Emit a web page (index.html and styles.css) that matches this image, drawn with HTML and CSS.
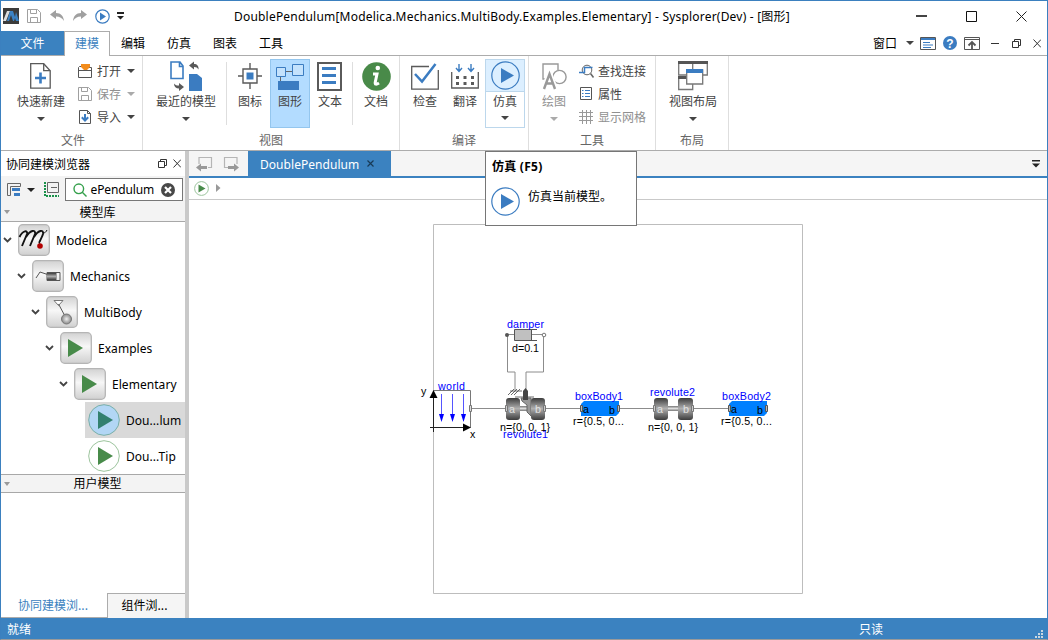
FILE: index.html
```
<!DOCTYPE html>
<html lang="zh-CN">
<head>
<meta charset="utf-8">
<title>Sysplorer</title>
<link rel="stylesheet" href="styles.css">
</head>
<body>
<svg width="0" height="0" class="defs">
  <defs>
    <linearGradient id="tile" x1="0" y1="0" x2="0" y2="1"><stop offset="0" stop-color="#d2d2d2"/><stop offset=".45" stop-color="#f7f7f7"/><stop offset="1" stop-color="#d0d0d0"/></linearGradient>
    <linearGradient id="drum" x1="0" y1="0" x2="0" y2="1"><stop offset="0" stop-color="#3c3c3c"/><stop offset=".48" stop-color="#b0b0b0"/><stop offset="1" stop-color="#3c3c3c"/></linearGradient>
    <linearGradient id="shaft" x1="0" y1="0" x2="0" y2="1"><stop offset="0" stop-color="#777"/><stop offset=".5" stop-color="#ddd"/><stop offset="1" stop-color="#777"/></linearGradient>
    <radialGradient id="ball"><stop offset="0" stop-color="#eee"/><stop offset="1" stop-color="#888"/></radialGradient>
  </defs>
</svg>
<div class="window">
  <header class="titlebar">
    <div class="quick">
      <svg width="16" height="16"><path fill="#3b3b3b" d="M0 0h16v16H0z"/><path fill="#ddd" d="M4 3h3L3 13H0z"/><path fill="#3b82c4" d="M7 3h3l2 6 1-5 3 9h-3l-1-3-1 3h-1L8 7l-2 6H4z"/></svg>
      <svg class="q-save" width="14" height="14" fill="none" stroke="#a0a0a0"><path d="M.5 .5h10l3 3v10H.5zM3.500 .5v4h6v-4M3.500 13.500v-5h7v5"/></svg>
      <svg class="q-undo" width="14" height="12"><path fill="#a0a0a0" d="M0 4.500 6 0v3c5 0 7.500 3 8 8-2-3-4-4.500-8-4.500V9z"/></svg>
      <svg class="q-redo" width="14" height="12"><path fill="#a0a0a0" d="M14 4.500 8 0v3C3 3 .5 6 0 11c2-3 4-4.500 8-4.500V9z"/></svg>
      <svg class="q-run" width="15" height="15"><circle cx="7.500" cy="7.500" r="6.700" fill="none" stroke="#3b7cc1" stroke-width="1.200"/><path fill="#3b7cc1" d="M5 3.500v8l6-4z"/></svg>
      <svg class="q-more" width="7" height="8"><path fill="#222" d="M0 0h7v2H0zM0 4h7L3.500 7.500z"/></svg>
    </div>
    <div class="title latin">DoublePendulum[Modelica.Mechanics.MultiBody.Examples.Elementary] - Sysplorer(Dev) - [图形]</div>
    <div class="winbtns">
      <svg width="11" height="11"><path fill="#444" d="M0 4h11v2H0z"/></svg>
      <svg width="11" height="11" fill="none" stroke="#111"><path d="M.5 .5h10v10H.5z"/></svg>
      <svg width="11" height="11" fill="none" stroke="#222"><path d="m.5 .5 10 10m0-10-10 10"/></svg>
    </div>
  </header>

  <nav class="menu">
    <span class="file">文件</span><span class="active">建模</span><span>编辑</span><span>仿真</span><span>图表</span><span>工具</span>
    <div class="menu-right">
      <b class="win">窗口</b>
      <i class="down"></i>
      <svg class="m-panel" width="16" height="13"><path fill="#fff" stroke="#555" d="M.5 .5h15v12H.5z"/><path fill="#3b7cc1" d="M1 1h14v2H1zM3 5h7v1H3zM3 7.500h10v1H3zM3 10h8v1H3z"/></svg>
      <svg class="m-help" width="14" height="14"><circle cx="7" cy="7" r="7" fill="#3b7cc1"/><text x="7" y="11.500" text-anchor="middle" class="qmark">?</text></svg>
      <svg class="m-up" width="16" height="13" fill="none" stroke="#555"><path d="M.5 .5h15v12H.5zM1 2.500h14"/><path stroke-width="1.800" d="M8 12V5M4.500 8.500 8 5l3.500 3.500"/></svg>
      <svg class="m-min" width="8" height="9"><path fill="#333" d="M0 4h8v1H0z"/></svg>
      <svg class="m-res" width="9" height="9" fill="none" stroke="#333"><path d="M.5 2.500h6v6h-6zM2.500 2.500v-2h6v6h-2"/></svg>
      <svg class="m-x" width="8" height="9" fill="none" stroke="#333"><path d="m.5 .5 7.500 8m0-8-7.500 8"/></svg>
    </div>
  </nav>

  <section class="ribbon">
    <div class="group g-file">
      <div class="tools">
        <div class="btn wide">
          <div class="ico"><svg width="22" height="26" fill="none" stroke="#5a5a5a" stroke-width="1.300"><path d="M.7 .7h13l6.500 7v17.500H.7z"/><path d="M13.700 .7v7h6.500"/><path stroke="#3b7cc1" stroke-width="2.600" d="M5 15h11M10.500 9.500v11"/></svg></div>
          <span>快速新建</span><div class="arr"><i class="down"></i></div>
        </div>
        <div class="rows">
          <div class="row"><svg width="14" height="14"><path fill="none" stroke="#555" d="M4.500 2.500h-3l-1 1v10h13v-10h-3M.5 6.500h13"/><path fill="#f28c1c" d="M3 0h9v3L9 6H6L4 4 3 3z"/></svg><span>打开</span><i class="down"></i></div>
          <div class="row off"><svg width="14" height="14" fill="none" stroke="#a0a0a0"><path d="M.5 .5h10l3 3v10H.5zM3.500 .5v4h6v-4M3.500 13.500v-5h7v5"/></svg><span>保存</span><i class="down"></i></div>
          <div class="row"><svg width="14" height="14" fill="none" stroke="#555"><path d="M1.500 .5h8l3 3v10h-11zM9.500 .5v3h3"/><path stroke="#3b7cc1" stroke-width="2" d="M7 4v6M3.800 7.300 7 10.500l3.200-3.200"/></svg><span>导入</span><i class="down"></i></div>
        </div>
      </div>
      <div class="name">文件</div>
    </div>
    <div class="group g-view">
      <div class="tools">
        <div class="btn recent">
          <div class="ico"><svg width="32" height="30"><path fill="#fff" stroke="#3b7cc1" stroke-width="1.600" d="M1 1h9l3 4v12.500H1zM9.500 1v4.500H13"/><path fill="#3b7cc1" d="M19 13h8l5 4v13H19z"/><path fill="#5a5a5a" d="m19 4.500 5-4V3c3 0 5 2 4.500 5.500C27.500 6.800 26.500 6 24 6v2.500zM14 26l-5 4v-2.500c-3 0-5-1.800-5-5 1.500 1.700 2.500 2 5 2V22z"/></svg></div>
          <span>最近的模型</span><div class="arr"><i class="down"></i></div>
        </div>
        <div class="sep s1"></div>
        <div class="btn"><div class="ico"><svg width="24" height="26" fill="none" stroke="#5a5a5a" stroke-width="1.400"><path d="M5 6h14v14H5zM12 0v6M12 20v6M0 13h5M19 13h5"/><path fill="#3b7cc1" stroke="none" d="M8.500 9.500h7v7h-7z"/></svg></div><span>图标</span></div>
        <div class="btn on"><div class="ico"><svg width="28" height="28" fill="none" stroke="#3b7cc1"><path fill="#c4e2fc" d="M.5 4.500h9v9h-9zM16.500 1.500h11v11h-11z"/><path stroke="#666" d="M10 8.500h6M4.500 14v4"/><path fill="#3b7cc1" stroke="none" d="M2 18h21v9H2z"/></svg></div><span>图形</span></div>
        <div class="btn"><div class="ico"><svg width="26" height="29"><path fill="#fff" stroke="#5a5a5a" stroke-width="2" d="M1 1h23v27H1z"/><path fill="#3b7cc1" d="M5 5h14v3H5zM5 12h14v3H5zM5 19h14v3H5z"/></svg></div><span>文本</span></div>
        <div class="sep s2"></div>
        <div class="btn"><div class="ico"><svg width="29" height="29"><circle cx="14.500" cy="14.500" r="14.300" fill="#498a49"/><circle cx="15.800" cy="6" r="2.300" fill="#fff"/><path fill="none" stroke="#fff" stroke-width="3" d="M11 12h4l-1.800 8.500q-.2 3 3.800 .5"/></svg></div><span>文档</span></div>
      </div>
      <div class="name">视图</div>
    </div>
    <div class="group g-compile">
      <div class="tools">
        <div class="btn"><div class="ico"><svg width="28" height="27" fill="none"><path stroke="#5a5a5a" stroke-width="1.300" d="M18 3.500H.7v22.700h26.600V7"/><path stroke="#3b7cc1" stroke-width="2.500" d="m4 11 7 7.500L24.500 1"/></svg></div><span>检查</span></div>
        <div class="btn"><div class="ico"><svg width="28" height="26" fill="none"><path stroke="#5a5a5a" stroke-width="1.300" d="M.7 9v16h26.600V9"/><path stroke="#3b7cc1" stroke-width="1.400" d="M8 1v7M5 5l3 3.500L11 5M20 1v7M17 5l3 3.500L23 5"/><path fill="#5a5a5a" d="M5 13h3v3H5zM12.500 13h3v3h-3zM20 13h3v3h-3zM5 19h3v3H5zM12.500 19h3v3h-3zM20 19h3v3h-3z"/></svg></div><span>翻译</span></div>
        <div class="btn hover"><div class="ico"><svg width="29" height="29"><circle cx="14.500" cy="14.500" r="13.700" fill="none" stroke="#3b7cc1" stroke-width="1.200"/><path fill="#3b7cc1" d="M10 7v15l13-7.500z"/></svg></div><span>仿真</span><div class="arr"><i class="down"></i></div></div>
      </div>
      <div class="name">编译</div>
    </div>
    <div class="group g-tools">
      <div class="tools">
        <div class="btn off"><div class="ico"><svg width="25" height="27" fill="none" stroke="#999" stroke-width="1.400"><path d="M5 16H1V1h15v6"/><circle cx="17.500" cy="14" r="6.600"/><path stroke="#fff" stroke-width="6" d="m2 26 5.500-15L13 26"/><path stroke="#999" stroke-width="2.400" d="m2 26 5.500-15L13 26M4 20.500h7.500"/></svg></div><span>绘图</span><div class="arr"><i class="down"></i></div></div>
        <div class="rows">
          <div class="row"><svg width="16" height="14" fill="none"><circle cx="8" cy="6" r="4.800" stroke="#666"/><path stroke="#666" stroke-width="1.500" d="m11.500 9.500 3 4"/><path stroke="#3b7cc1" stroke-width="1.500" d="M0 8.500h5.500v-5h8"/></svg><span>查找连接</span></div>
          <div class="row"><svg width="14" height="14" fill="none"><path stroke="#555" d="M1.500 .5h11v12h-11z"/><path stroke="#3b7cc1" d="M3 3.500h1.500M6 3.500h5M3 6.500h1.500M6 6.500h5M3 9.500h1.500M6 9.500h5"/></svg><span>属性</span></div>
          <div class="row off"><svg width="14" height="14" fill="none" stroke="#999"><path d="M3.500 0v14M7.500 0v14M11.500 0v14M0 2.500h14M0 6.500h14M0 10.500h14"/></svg><span>显示网格</span></div>
        </div>
      </div>
      <div class="name">工具</div>
    </div>
    <div class="group g-layout">
      <div class="tools">
        <div class="btn wide"><div class="ico"><svg width="30" height="30" fill="#fff" stroke="#777" stroke-width="1.300"><path d="M.7 1h14v13H.7zM14.700 1h14.600v13H14.700zM.7 16h14v12.500H.7z"/><path stroke="#555" stroke-width="3" d="M0 1.500h30M0 16.500h14"/><path d="M8.700 9h16v14h-16z"/><path fill="#3b7cc1" stroke="none" d="M8 8h17v4H8z"/></svg></div><span>视图布局</span><div class="arr"><i class="down"></i></div></div>
      </div>
      <div class="name">布局</div>
    </div>
  </section>

  <main class="body">
    <aside class="side">
      <div class="side-head"><span>协同建模浏览器</span>
        <svg width="9" height="9" fill="none" stroke="#333"><path d="M.5 2.500h6v6h-6zM2.500 2.500v-2h6v6h-2"/></svg>
        <svg class="close" width="8" height="9" fill="none" stroke="#333"><path d="m.5 .5 7.500 8m0-8-7.500 8"/></svg>
      </div>
      <div class="side-tools">
        <svg width="14" height="13" fill="none"><path stroke="#666" d="M13.500 3.500v-3H.5v12h3v-9h10"/><path fill="#3b7cc1" d="M5 5h8v3H5zM7 10h6v3H7z"/></svg>
        <i class="down"></i>
        <svg class="t2" width="15" height="15" fill="none"><path stroke="#666" d="M3.500 .5h11v10h-11zM7 5.500h6"/><path stroke="#19914a" stroke-width="2" stroke-dasharray="2 1" d="M1 0v14h14"/></svg>
        <div class="search">
          <svg width="14" height="14" fill="none" stroke="#35a04c" stroke-width="1.400"><circle cx="5.800" cy="5.800" r="4.800"/><path d="m9.300 9.300 4.200 4.200"/></svg>
          <div class="query latin"><span>ePendulum</span></div>
          <svg width="14" height="14"><circle cx="7" cy="7" r="7" fill="#484848"/><path stroke="#fff" stroke-width="2.200" d="m4 4 6 6m0-6-6 6"/></svg>
        </div>
      </div>
      <div class="section"><i></i>模型库</div>
      <div class="tree latin">
        <div class="node"><svg class="chev" width="9" height="6"><path d="m1 1 3.500 3.500L8 1"/></svg><svg width="32" height="32"><rect class="tile" x=".7" y=".7" width="30.600" height="30.600" rx="4"/><path fill="none" stroke="#111" stroke-width="1.900" d="M1.500 13C5 6 10 6 9 10L4 22M8 13c4-7 10-8 9-3l-5 12M16 13c4-7 10-8 9-3-1 4-5 9-3 9"/><path fill="none" stroke="#111" d="M25 9c2 0 3-1 4-3"/><circle cx="22" cy="22" r="2.800" fill="#b30000"/></svg><span>Modelica</span></div>
        <div class="node l1"><svg class="chev" width="9" height="6"><path d="m1 1 3.500 3.500L8 1"/></svg><svg width="32" height="32"><rect class="tile" x=".7" y=".7" width="30.600" height="30.600" rx="4"/><path fill="none" stroke="#555" d="m4 18 4-6 9 3M15 12.500h13v8H15zM24 12.500v8"/><path fill="url(#drum)" d="M15 13h9v7h-9z"/></svg><span>Mechanics</span></div>
        <div class="node l2"><svg class="chev" width="9" height="6"><path d="m1 1 3.500 3.500L8 1"/></svg><svg width="32" height="32"><rect class="tile" x=".7" y=".7" width="30.600" height="30.600" rx="4"/><path stroke="#777" fill="#fff" d="M8 4.500h9l-4.500 5z"/><path stroke="#555" d="m12.500 8 7 13"/><circle cx="20.500" cy="23" r="5" fill="url(#ball)" stroke="#777"/></svg><span>MultiBody</span></div>
        <div class="node l3"><svg class="chev" width="9" height="6"><path d="m1 1 3.500 3.500L8 1"/></svg><svg width="32" height="32"><rect class="tile" x=".7" y=".7" width="30.600" height="30.600" rx="4"/><path fill="#488b4a" d="M8 7v18l15-9z"/></svg><span>Examples</span></div>
        <div class="node l4"><svg class="chev" width="9" height="6"><path d="m1 1 3.500 3.500L8 1"/></svg><svg width="32" height="32"><rect class="tile" x=".7" y=".7" width="30.600" height="30.600" rx="4"/><path fill="#488b4a" d="M8 7v18l15-9z"/></svg><span>Elementary</span></div>
        <div class="leaf sel"><svg width="32" height="32"><circle cx="16" cy="16" r="15.300" fill="#b2d6f5" stroke="#78afa9"/><path fill="#32806f" d="M10 7v18l15-9z"/></svg><span>Dou...lum</span></div>
        <div class="leaf"><svg width="32" height="32"><circle cx="16" cy="16" r="15.300" fill="#fff" stroke="#9cc49d"/><path fill="#488b4a" d="M10 7v18l15-9z"/></svg><span>Dou...Tip</span></div>
      </div>
      <div class="section user"><i></i>用户模型</div>
      <div class="side-fill"></div>
      <div class="side-tabs"><span class="cur">协同建模浏...</span><span class="other">组件浏...</span></div>
    </aside>

    <section class="doc">
      <div class="tabs">
        <svg class="nav1" width="17" height="16" fill="none"><path stroke="#b5b5b5" stroke-width="1.200" d="M3 8V1.500h12.500v10H12"/><path fill="#999" d="m0 11.500 5-4V10h6v3H5v2.500z"/></svg>
        <svg class="nav2" width="17" height="16" fill="none"><path stroke="#b5b5b5" stroke-width="1.200" d="M5 11.500H1.500v-10H14V8"/><path fill="#999" d="m16 11.500-5-4V10H5v3h6v2.500z"/></svg>
        <div class="tab latin"><span>DoublePendulum</span><svg width="7" height="7" stroke="#183a56" stroke-width="1.200"><path d="m.5 .5 6 6m0-6-6 6"/></svg></div>
        <svg class="tabmore" width="8" height="8"><path fill="#222" d="M0 0h8v1.500H0zM0 3.500h8L4 7.500z"/></svg>
      </div>
      <div class="crumbs">
        <svg width="15" height="15"><circle cx="7.500" cy="7.500" r="6.900" fill="#fff" stroke="#9cc49d"/><path fill="#488b4a" d="M4.500 3.500v8l7-4z"/></svg>
        <svg class="next" width="5" height="8"><path fill="#999" d="m0 0 4.500 4L0 8z"/></svg>
      </div>
      <div class="canvas">
        <svg class="diagram" width="858" height="418" viewBox="189 200 858 418">
          <path fill="none" stroke="#bdbdbd" d="M433.500 224.500h369v369h-369z"/>
          <g fill="none" stroke="#8c8c8c">
            <path d="M472 408.500h35M545 408.500h36M618 408.500h35M693 408.500h36"/>
            <path d="M507.500 335v37h7.500v18M543.500 335v37h-17.500v18M507 334.500h37"/>
          </g>
          <path fill="#fff" stroke="#777" d="M433.500 390.500h37v37h-37z"/>
          <path stroke="#222" d="M433.500 432V396M430 427.500h37"/>
          <path d="m433.500 390 4 8h-8zM471 427.500l-8-4v8z"/>
          <path stroke="#5555ff" d="M441.500 394v22M452.500 394v22M463.500 394v22"/>
          <path fill="#00f" d="M439 414h5l-2.500 8zM450 414h5l-2.500 8zM461 414h5l-2.500 8z"/>
          <path fill="#ddd" stroke="#777" d="M469.500 405.500h2v6h-2z"/>
          <path fill="#c0c0c0" stroke="#555" d="M514.500 329.500h17v11h-17z"/><path stroke="#555" fill="none" d="M531 329.500h6M531 340.500h6"/>
          <circle cx="507" cy="335" r="2" fill="#555"/><circle cx="544" cy="335" r="1.800" fill="#fff" stroke="#777"/>
          <path stroke="#444" stroke-width=".8" fill="none" d="m508 395 6-6m-3 6 6-6m-3 6 6-6M510 391h12M515 397h19"/>
          <path fill="url(#shaft)" d="M519 406h13v5h-13z"/>
          <path fill="#999" stroke="#666" d="M521 398h10v18l-4-4v-7l-5-4z"/><path fill="#444" d="M523 391l2.500-3 2.500 3v9h-5z"/>
          <rect x="506" y="398" width="14" height="22" rx="3" fill="url(#drum)"/><rect x="531" y="398" width="14" height="22" rx="3" fill="url(#drum)"/>
          <path fill="#ccc" stroke="#777" d="M505.500 405.500h2v6h-2zM543.500 405.500h2v6h-2z"/>
          <path fill="url(#shaft)" d="M667 406h12v5h-12z"/>
          <rect x="654" y="398" width="14" height="22" rx="3" fill="url(#drum)"/><rect x="678" y="398" width="15" height="22" rx="3" fill="url(#drum)"/>
          <path fill="#ccc" stroke="#777" d="M653.500 405.500h2v6h-2zM691.500 405.500h2v6h-2z"/>
          <g id="box"><path fill="#0080ff" d="m581 404 3-3h35v12l-3 3h-35z"/><path fill="#bbb" stroke="#555" d="M580.500 405.500h2v6h-2zM617.500 405.500h2v6h-2z"/></g>
          <use href="#box" x="148"/>
          <g class="lt"><text x="509" y="413">a</text><text x="535" y="413">b</text><text x="657" y="413">a</text><text x="683" y="413">b</text></g>
          <g class="bl"><text x="507" y="328" textLength="37">damper</text><text x="438" y="390" textLength="27">world</text><text x="503" y="438" textLength="45">revolute1</text><text x="575" y="400" textLength="48">boxBody1</text><text x="650" y="396" textLength="45">revolute2</text><text x="722" y="400" textLength="49">boxBody2</text></g>
          <g class="bk"><text x="421" y="395">y</text><text x="470" y="438">x</text><text x="512" y="352" textLength="27">d=0.1</text><text x="500" y="431" textLength="50">n={0, 0, 1}</text><text x="583" y="413">a</text><text x="609" y="414">b</text><text x="573" y="425" textLength="51">r={0.5, 0...</text><text x="648" y="431" textLength="50">n={0, 0, 1}</text><text x="731" y="413">a</text><text x="757" y="414">b</text><text x="721" y="425" textLength="51">r={0.5, 0...</text></g>
        </svg>
      </div>
    </section>
  </main>

  <footer class="status"><span>就绪</span><span class="ro">只读</span>
    <svg width="8" height="8" fill="#c9d6e0"><path d="M6 0h2v2H6zM3 3h2v2H3zM6 3h2v2H6zM0 6h2v2H0zM3 6h2v2H3zM6 6h2v2H6z"/></svg>
  </footer>

  <div class="tooltip">
    <strong class="latin">仿真 (F5)</strong>
    <div><svg width="29" height="29"><circle cx="14.500" cy="14.500" r="13.700" fill="none" stroke="#3b7cc1" stroke-width="1.200"/><path fill="#3b7cc1" d="M10 7v15l13-7.500z"/></svg><span>仿真当前模型。</span></div>
  </div>
</div>
</body>
</html>
```
FILE: styles.css
```
* { box-sizing: border-box; }
body { margin: 0; font: 12px/18px "Noto Sans CJK SC", sans-serif; color: #000; }
svg { display: block; flex: none; }
.defs { position: absolute; }
.latin { font-family: "Noto Sans", "Noto Sans CJK SC", sans-serif; }
.window { position: relative; width: 1048px; height: 640px; border: 1px solid #3b80bf; border-bottom-color: #9a9a9a; background: #fff; display: flex; flex-direction: column; overflow: hidden; }
.down { width: 0; height: 0; border: 4px solid transparent; border-top-color: #444; border-bottom: 0; flex: none; }

.titlebar { height: 30px; display: flex; align-items: center; position: relative; }
.quick { display: flex; align-items: center; padding-left: 2px; width: 233px; }
.q-save { margin-left: 8px; }
.q-undo { margin-left: 9px; }
.q-redo { margin-left: 9px; }
.q-run { margin-left: 8px; }
.q-more { margin-left: 7px; }
.title { white-space: nowrap; width: 640px; font-size: 12px; letter-spacing: .2px; padding-top: 1px; }
.winbtns { display: flex; gap: 39px; margin-left: auto; padding-right: 20px; }

.menu { height: 25px; display: flex; border-bottom: 1px solid #acacac; }
.menu > span { width: 46px; text-align: center; line-height: 24px; }
.menu > .file { width: 63px; background: #3b82c0; color: #fff; }
.menu > .active { width: 46px; height: 25px; color: #3b82c0; border: 1px solid #acacac; border-bottom: 0; background: #fff; line-height: 22px; }
.menu-right { margin-left: auto; display: flex; align-items: center; padding-right: 6px; }
.menu-right .win { font-weight: 400; margin-right: 9px; }
.m-panel { margin-left: 6px; }
.m-help { margin-left: 7px; }
.m-up { margin-left: 7px; }
.m-min { margin-left: 11px; }
.m-res { margin-left: 13px; }
.m-x { margin-left: 12px; }
.qmark { font: bold 12px "Liberation Sans", sans-serif; fill: #fff; }

.ribbon { height: 95px; display: flex; border-bottom: 1px solid #acacac; color: #444; }
.group { display: flex; flex-direction: column; padding-top: 3px; position: relative; height: 94px; border-right: 1px solid #dedede; }
.tools { display: flex; height: 69px; }
.name { text-align: center; line-height: 23px; color: #666; height: 22px; }
.g-file { width: 142px; padding-left: 8px; }
.g-file .name { padding-right: 5px; }
.g-view { width: 257px; padding-left: 7px; }
.g-view .name { padding-right: 7px; }
.g-compile { width: 129px; padding-left: 5px; }
.g-compile .name { padding-right: 5px; }
.g-tools { width: 127px; padding-left: 5px; }
.g-tools .name { padding-right: 5px; }
.g-layout { width: 73px; padding-left: 5px; }
.g-layout .name { padding-right: 5px; }
.btn { width: 40px; display: flex; flex-direction: column; align-items: center; white-space: nowrap; }
.btn.wide { width: 64px; }
.btn.recent { width: 72px; }
.ico { height: 33px; display: flex; align-items: center; justify-content: center; padding-top: 1px; }
.btn > span { line-height: 17px; height: 18px; }
.arr { height: 18px; display: flex; align-items: center; }
.btn.on { background: #b3dcff; border: 1px solid #94c6ee; }
.btn.on .ico { height: 32px; }
.btn.hover { border: 1px solid #bcd7ec; }
.btn.hover .ico { height: 32px; width: 38px; background: #dcefff; border-bottom: 1px solid #bcd7ec; }
.btn.off, .row.off { color: #909090; }
.off .down { border-top-color: #aaa; }
.sep { width: 1px; background: #dedede; margin-top: 3px; height: 63px; }
.s1 { margin-left: 4px; margin-right: 3px; }
.s2 { margin-left: 2px; margin-right: 3px; }
.rows { padding-left: 5px; white-space: nowrap; }
.row { display: flex; align-items: center; height: 23px; padding-top: 1px; }
.row span { margin-left: 5px; }
.row .down { margin-left: 6px; }
.g-tools .row svg { width: 16px; }
.g-tools .row span { margin-left: 3px; }

.body { flex: 1; display: flex; min-height: 0; }
.side { width: 188px; border-right: 4px solid #c9c9c9; display: flex; flex-direction: column; }
.side-head { height: 25px; display: flex; align-items: center; padding: 0 4px 0 5px; }
.side-head span { flex: 1; }
.side-head .close { margin-left: 6px; }
.side-tools { height: 27px; background: #f3f3f3; display: flex; align-items: center; padding-left: 6px; }
.side-tools > .down { margin-left: 6px; border-top-color: #222; }
.t2 { margin-left: 9px; }
.search { margin-left: 6px; width: 118px; height: 23px; border: 1px solid #777; background: #fff; display: flex; align-items: center; padding-left: 7px; }
.query { margin: 0 7px 0 4px; width: 63px; display: flex; justify-content: flex-end; font-size: 12px; letter-spacing: -.15px; }
.section { height: 19px; background: #f3f3f3; border-bottom: 1px solid #a8a8a8; text-align: center; line-height: 17px; padding-left: 9px; display: flex; justify-content: center; position: relative; }
.section i { position: absolute; left: 3px; top: 7px; border: 3px solid transparent; border-top: 4px solid #999; border-bottom: 0; }
.section.user { border-top: 1px solid #a8a8a8; line-height: 16px; }
.tree { height: 252px; font-size: 12px; letter-spacing: .05px; }
.node, .leaf { height: 36px; display: flex; align-items: center; white-space: nowrap; padding-left: 2px; }
.chev { margin-right: 6px; fill: none; stroke: #444; stroke-width: 1.800; }
.node span, .leaf span { margin-left: 6px; padding-top: 2px; }
.l1 { padding-left: 16px; }
.l2 { padding-left: 30px; }
.l3 { padding-left: 44px; }
.l4 { padding-left: 58px; }
.leaf { margin-left: 84px; padding-left: 3px; }
.leaf.sel { background: #d9d9d9; }
.tile { fill: url(#tile); stroke: #b5b5b5; stroke-width: 1.300; }
.side-fill { flex: 1; }
.side-tabs { height: 25px; display: flex; }
.side-tabs span { text-align: center; line-height: 22px; }
.side-tabs .cur { width: 106px; color: #3b82c0; border-bottom: 1px solid #acacac; padding-right: 2px; line-height: 23px; }
.side-tabs .other { flex: 1; background: #f5f5f5; border: 1px solid #acacac; border-width: 1px 0 0 1px; padding-right: 4px; }

.doc { flex: 1; display: flex; flex-direction: column; min-width: 0; }
.tabs { height: 27px; background: #f5f5f5; border-bottom: 2px solid #3b82c0; display: flex; align-items: center; }
.nav1 { margin-left: 7px; }
.nav2 { margin-left: 10px; }
.tab { width: 143px; height: 25px; margin-left: 8px; background: #3b82c0; color: #fff; display: flex; align-items: center; padding-left: 12px; font-size: 12px; letter-spacing: .05px; }
.tab span { width: 99px; padding-top: 2px; }
.tab svg { margin-left: 8px; }
.tabmore { margin-left: auto; margin-right: 7px; }
.crumbs { height: 22px; border-bottom: 1px solid #c9c9c9; display: flex; align-items: center; padding-left: 5px; padding-bottom: 1px; }
.next { margin-left: 7px; }
.canvas { flex: 1; min-height: 0; }
.diagram { font: 10.700px "Liberation Sans", sans-serif; }
.bl { fill: #00f; }
.bk { fill: #000; }
.lt { fill: #e2e2e2; }

.status { height: 21px; background: #3b82c0; color: #fff; display: flex; align-items: center; padding: 0 4px 0 6px; }
.status .ro { margin-left: 828px; }
.status svg { margin-left: auto; margin-top: 10px; }

.tooltip { position: absolute; left: 484px; top: 150px; width: 152px; height: 75px; background: #fff; border: 1px solid #767676; padding: 6px; }
.tooltip strong { display: block; line-height: 18px; letter-spacing: .25px; }
.tooltip div { display: flex; margin-top: 11px; }
.tooltip div span { margin-left: 8px; line-height: 18px; }
.tooltip div svg { margin-left: -1px; }
```
